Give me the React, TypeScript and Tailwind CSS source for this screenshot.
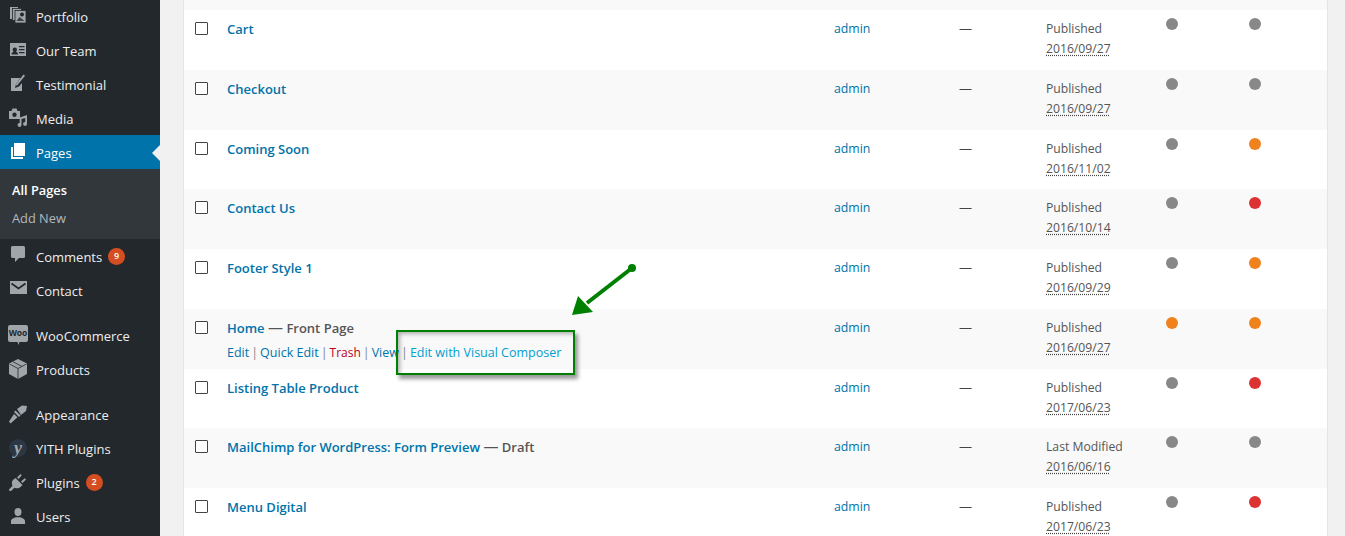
const F = "font-['Open_Sans',sans-serif]";
const D = "#23282d";

const I = ({ children }: { children: React.ReactNode }) => (
  <svg viewBox="0 0 20 20" className="w-5 h-5 shrink-0" fill="currentColor">{children}</svg>
);

const icons: Record<string, React.ReactNode> = {
  portfolio: <>
    <rect x="2" y="1" width="8" height="12" />
    <rect x="4.500" y="2.500" width="9" height="12" stroke={D} strokeWidth=".8" />
    <rect x="7" y="4.500" width="11" height="12.500" stroke={D} strokeWidth=".8" />
    <circle cx="14" cy="8.500" r="2" fill={D} />
    <path d="M8.500 15l3-4 5 4z" fill={D} opacity=".8" />
  </>,
  team: <path fillRule="evenodd" d="M2 3h16v13H2zM3.500 14.500h6.500c0-1.800-.8-2.300-2-2.800.6-.5 1-1.200 1-2A2.200 2.200 0 0 0 6.800 7.500a2.200 2.200 0 0 0-2.200 2.200c0 .8.400 1.500 1 2-1.200.5-2.100 1-2.100 2.800zM11 6v1.300h5.500V6zm0 3v1.300h5.500V9zm0 3v1.300h5.500V12z" />,
  testimonial: <>
    <path d="M3 4h9.500L8 10l-1 4 4-1.500 3-3.500v8H3z" />
    <path d="M15.500 0.500l1.500 1.200L9.500 11l-1.700.8.300-1.900z" />
  </>,
  media: <>
    <path fillRule="evenodd" d="M1 3h2.500l1-2.500h4l1 2.500H12v8H1zm5.500 1.500a2.200 2.200 0 1 0 0 4.400 2.200 2.200 0 0 0 0-4.400z" />
    <path d="M19 7v9a2 2 0 1 1-1.800-2V10l-3.700 1v6a2 2 0 1 1-1.800-2V9.500z" />
  </>,
  pages: <>
    <path d="M6 1h11v13H6z" />
    <path d="M3 5h2v10h10v2H3z" />
  </>,
  comments: <path d="M4.500 0h11A1.500 1.500 0 0 1 17 1.500v9a1.500 1.500 0 0 1-1.500 1.500H11l-4 4v-4H4.500A1.500 1.500 0 0 1 3 10.500v-9A1.500 1.500 0 0 1 4.500 0z" />,
  contact: <>
    <path d="M2 1h17v13H2z" />
    <path d="M3.500 3.500l7 5 7-5" fill="none" stroke={D} strokeWidth="1.800" />
  </>,
  woo: <path d="M2 0h16a2 2 0 0 1 2 2v13a2 2 0 0 1-2 2h-6.500l-1 3-1-3H2a2 2 0 0 1-2-2V2a2 2 0 0 1 2-2z" />,
  products: <>
    <path d="M10 0l9 4.500V15l-9 5-9-5V4.500z" />
    <path d="M1.500 5L10 9.500 18.500 5M10 9.500V20M5 2.800l9 4.700" fill="none" stroke={D} strokeWidth=".8" />
  </>,
  appearance: <>
    <path d="M9 5l5-3.500L19 2l-1 5-5 4z" />
    <path d="M7.500 6.500l5 5-1.500 1.500-5-5z" />
    <path d="M6 10l3.500 3.200L2.500 19.500 1 17.500z" />
  </>,
  plugins: <>
    <path d="M7.500 6l7 7-2 2c-1.500 1.500-4 1.800-6 .7L3 19H1.500l-.5-1.500 3.500-3.800c-1-2-.8-4.700.7-6z" />
    <path d="M9 5.500l3.500-3.500 1.300 1.200-3.300 3.800zM13 9.500l3.700-3.200 1.300 1.300-3.500 3.400z" />
  </>,
  users: <>
    <ellipse cx="10" cy="6" rx="3.500" ry="4" />
    <path d="M3 18v-3c0-2 3-3 5-3.700h4c2 .7 5 1.700 5 3.700v3z" />
  </>,
};

const Yith = () => (
  <span className="w-[18px] h-[18px] ml-[1px] shrink-0 rounded-full bg-[#2c3743] flex items-center justify-center text-[#a0a5aa] text-[18px] font-bold italic leading-none font-['Liberation_Serif',serif]">y</span>
);

const Item = ({ icon, label, badge, active, mt }: { icon: string; label: string; badge?: string; active?: boolean; mt?: boolean }) => (
  <div className={`relative h-[34px] flex items-center pl-[8px] ${mt ? "mt-[11px]" : ""} ${active ? "bg-[#0073aa] text-white" : "text-[#eeeeee]"}`}>
    <span className={`w-[28px] flex justify-start ${active ? "text-white" : "text-[#a0a5aa]"}`}>
      {icon === "yith" ? <Yith /> : icon === "woo" ? (
        <span className="relative w-5 h-5 block">
          <I>{icons.woo}</I>
          <span className="absolute inset-x-0 top-[2px] text-center text-[8.500px] font-bold leading-[12px] text-[#23282d]">Woo</span>
        </span>
      ) : <I>{icons[icon]}</I>}
    </span>
    <span className="text-[13px] pt-[2px] leading-none">{label}</span>
    {badge && <span className="ml-[6px] w-[17px] h-[17px] rounded-full bg-[#d54e21] text-white text-[9px] font-semibold flex items-center justify-center">{badge}</span>}
    {active && <span className="absolute right-0 top-[10px] w-0 h-0 border-y-[8px] border-y-transparent border-r-[8px] border-r-[#f1f1f1]" />}
  </div>
);

const Sidebar = () => (
  <aside className="w-[160px] shrink-0 h-full bg-[#23282d] overflow-hidden">
    <div className="-mt-px">
      <Item icon="portfolio" label="Portfolio" />
      <Item icon="team" label="Our Team" />
      <Item icon="testimonial" label="Testimonial" />
      <Item icon="media" label="Media" />
      <Item icon="pages" label="Pages" active />
      <div className="h-[70px] bg-[#32373c] pl-[12px] pt-[8px] text-[12.800px]">
        <div className="h-[28px] flex items-center font-semibold text-white">All Pages</div>
        <div className="h-[28px] flex items-center text-[#b4b9be]">Add New</div>
      </div>
      <Item icon="comments" label="Comments" badge="9" />
      <Item icon="contact" label="Contact" />
      <Item icon="woo" label="WooCommerce" mt />
      <Item icon="products" label="Products" />
      <Item icon="appearance" label="Appearance" mt />
      <Item icon="yith" label="YITH Plugins" />
      <Item icon="plugins" label="Plugins" badge="2" />
      <Item icon="users" label="Users" />
    </div>
  </aside>
);

type Row = { title: string; suffix?: string; status?: string; date: string; a: string; b: string; actions?: boolean };
const G = "bg-[#888888]", O = "bg-[#f0821e]", R = "bg-[#dc3232]";
const rows: Row[] = [
  { title: "Cart", date: "2016/09/27", a: G, b: G },
  { title: "Checkout", date: "2016/09/27", a: G, b: G },
  { title: "Coming Soon", date: "2016/11/02", a: G, b: O },
  { title: "Contact Us", date: "2016/10/14", a: G, b: R },
  { title: "Footer Style 1", date: "2016/09/29", a: G, b: O },
  { title: "Home", suffix: "Front Page", date: "2016/09/27", a: O, b: O, actions: true },
  { title: "Listing Table Product", date: "2017/06/23", a: G, b: R },
  { title: "MailChimp for WordPress: Form Preview", suffix: "Draft", status: "Last Modified", date: "2016/06/16", a: G, b: G },
  { title: "Menu Digital", date: "2017/06/23", a: G, b: R },
];

const Sep = () => <span className="text-[#82878c] mx-[2px]">|</span>;

const TableRow = ({ r, i }: { r: Row; i: number }) => (
  <div className={`h-[59.750px] shrink-0 flex ${i % 2 ? "bg-[#f9f9f9]" : "bg-white"}`}>
    <div className="w-[43px] pl-[11px] pt-[12px] shrink-0">
      <div className="w-[13px] h-[13px] border border-[#444444] bg-white rounded-[1px]" />
    </div>
    <div className="w-[607px] shrink-0 pt-[8px]">
      <div className="text-[13px] leading-[22px] whitespace-nowrap text-[#555555]">
        <span className="font-semibold text-[#0073aa]">{r.title}</span>
        {r.suffix && <span className="font-semibold"> <span className="text-[15px] leading-none">—</span> {r.suffix}</span>}
      </div>
      {r.actions && (
        <div className="text-[12.500px] leading-[18px] mt-[5px] whitespace-nowrap text-[#0073aa]">
          Edit<Sep />Quick Edit<Sep /><span className="text-[12px] text-[#bb0022]">Trash</span><Sep />View<Sep /><span className="text-[#00a0d2]">Edit with Visual Composer</span>
        </div>
      )}
    </div>
    <div className="w-[125px] shrink-0 pt-[9px] text-[12.300px] leading-[20px] text-[#0073aa]">admin</div>
    <div className="w-[87px] shrink-0 pt-[8px] text-[13px] leading-[20px] text-[#444444]">—</div>
    <div className="w-[120px] shrink-0 pt-[9px] text-[12.200px] leading-[20px] text-[#555555]">
      <div>{r.status ?? "Published"}</div>
      <div className="underline decoration-dotted decoration-[#444444] underline-offset-2">{r.date}</div>
    </div>
    <div className="w-[83px] shrink-0 pt-[8px]"><div className={`w-3 h-3 rounded-full ${r.a}`} /></div>
    <div className="pt-[8px]"><div className={`w-3 h-3 rounded-full ${r.b}`} /></div>
  </div>
);

export default function App() {
  return (
    <div className={`relative w-[1345px] h-[536px] overflow-hidden flex bg-[#f1f1f1] ${F}`}>
      <Sidebar />
      <main className="ml-[23px] w-[1145px] h-full overflow-hidden border-l border-r border-[#e5e5e5] bg-[#f9f9f9] pt-[10px]">
        {rows.map((r, i) => <TableRow key={r.title} r={r} i={i} />)}
      </main>
      <div className="absolute left-[396px] top-[330px] w-[179px] h-[45px] border-2 border-[#008000] shadow-[3px_4px_4px_rgba(0,0,0,0.4),inset_5px_5px_4px_-3px_rgba(0,0,0,0.3)]" />
      <svg className="absolute left-[565px] top-[260px] w-[75px] h-[60px]" viewBox="0 0 75 60">
        <line x1="67" y1="8" x2="22" y2="43" stroke="#008000" strokeWidth="4" />
        <circle cx="67" cy="8" r="4" fill="#008000" />
        <polygon points="7,55 13,36 28,52" fill="#008000" />
      </svg>
    </div>
  );
}
